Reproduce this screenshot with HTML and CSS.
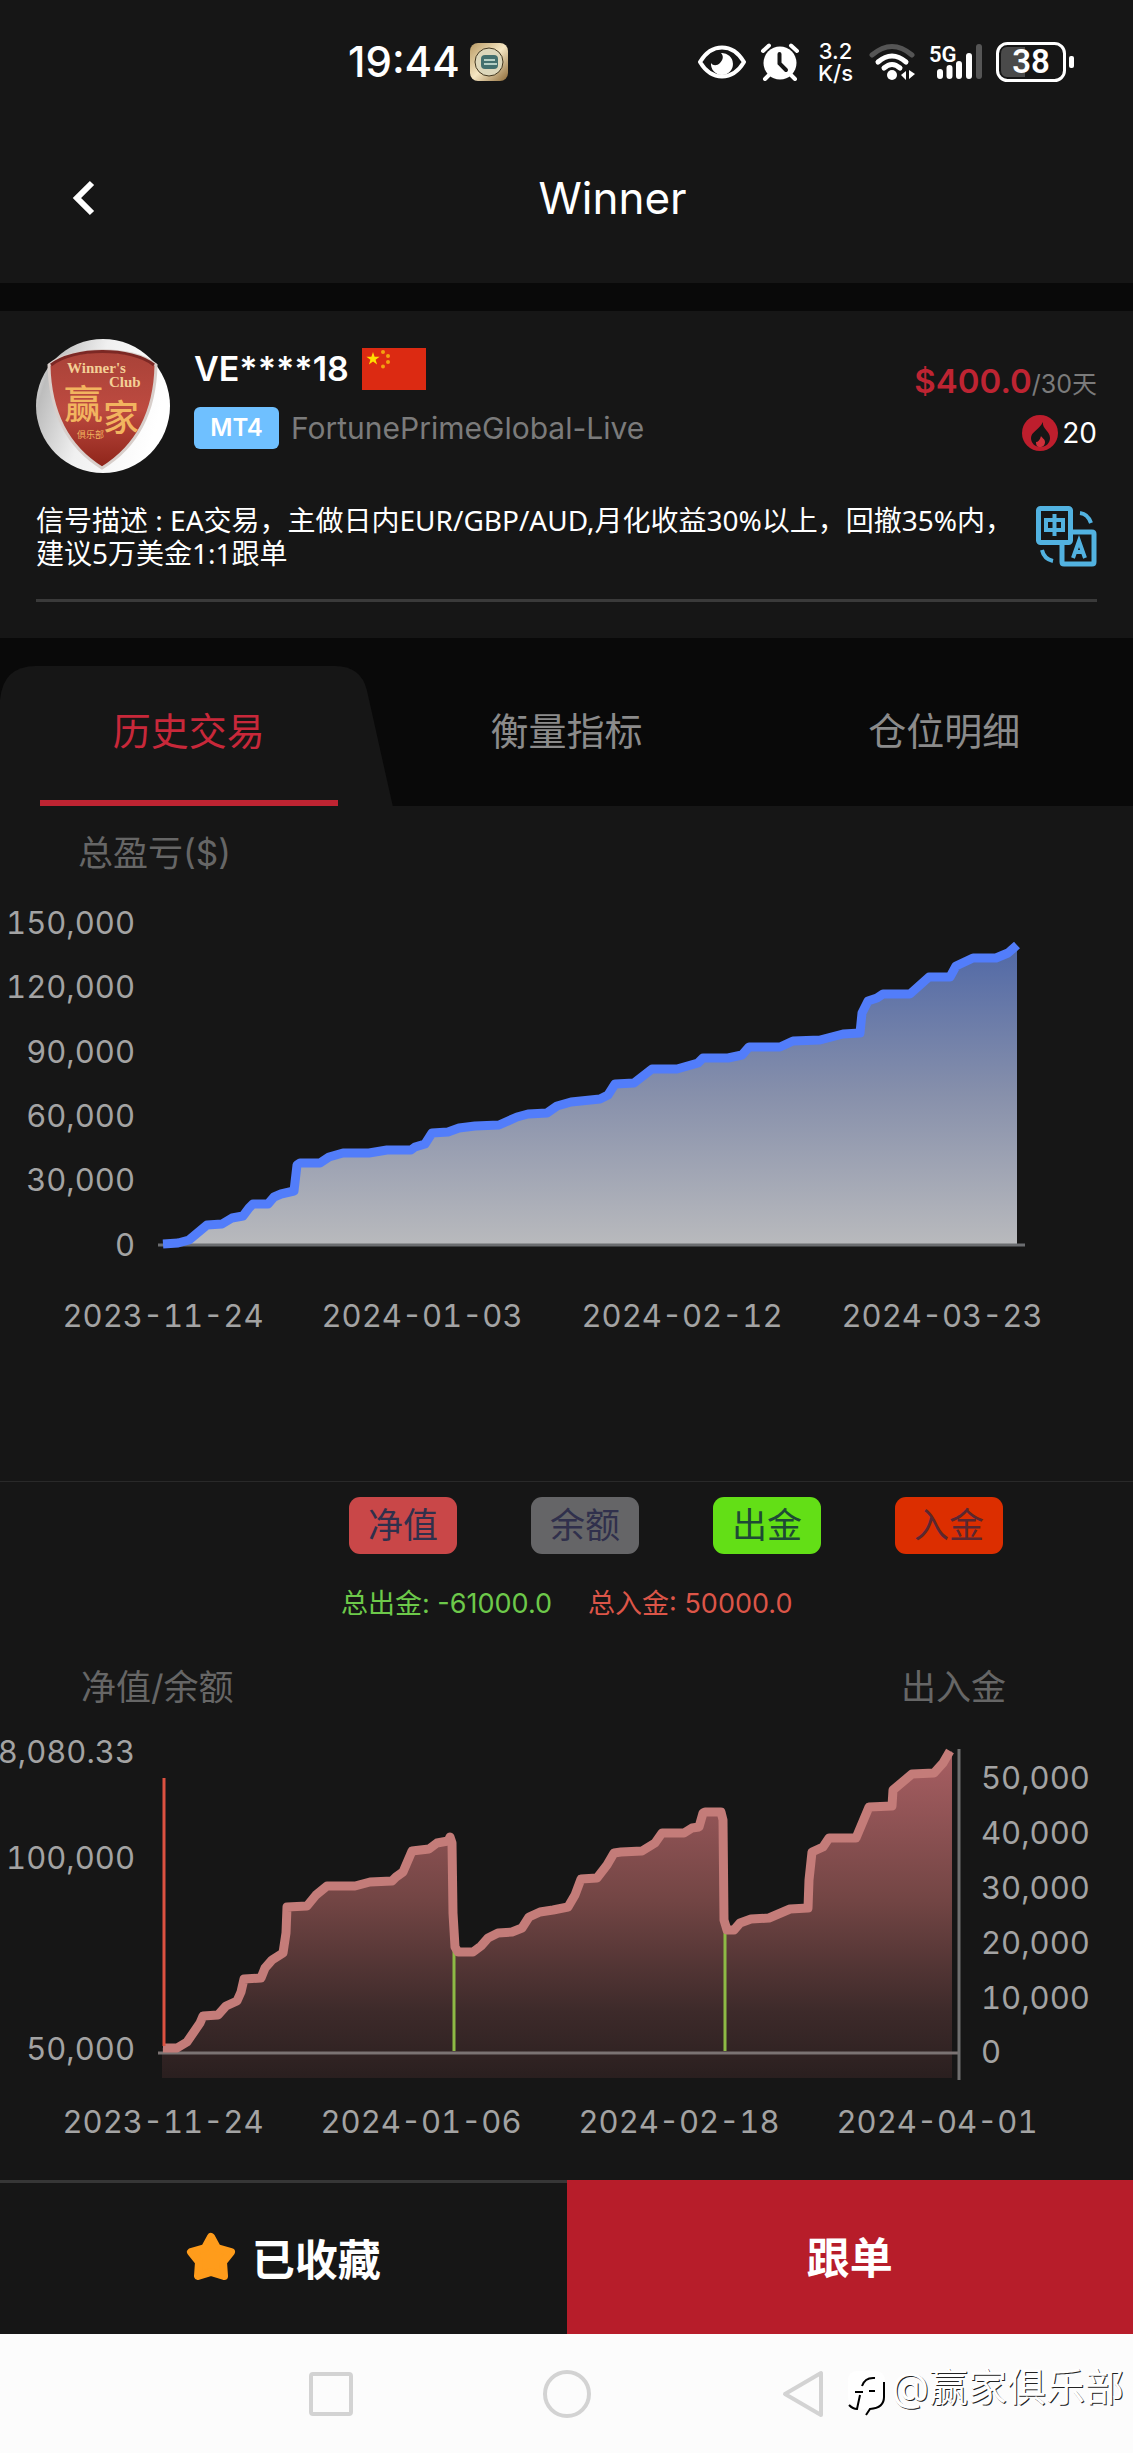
FILE: index.html
```html
<!DOCTYPE html>
<html lang="zh-CN">
<head>
<meta charset="utf-8">
<meta name="viewport" content="width=device-width, initial-scale=1">
<title>Winner</title>
<link rel="stylesheet" href="styles.css">
</head>
<body>
<header class="top">
  <div class="status">
    <div class="status-left">
      <span class="clock">19:44</span>
      <svg class="app-icon" width="38" height="38" viewBox="0 0 38 38" aria-hidden="true">
        <defs><linearGradient id="gold" x1="0" y1="0" x2="1" y2="1"><stop offset="0" stop-color="#b99a64"/><stop offset=".5" stop-color="#f5e6c2"/><stop offset="1" stop-color="#8d6a38"/></linearGradient></defs>
        <rect width="38" height="38" rx="8" fill="url(#gold)"/>
        <circle cx="19" cy="19" r="14" fill="#ddd7bb" stroke="#443820" stroke-width="1"/>
        <rect x="11" y="12" width="17" height="14" rx="4" fill="#44706e"/>
        <path d="M14 17h11M14 21h13" stroke="#b5cfc4" stroke-width="2"/>
      </svg>
    </div>
    <div class="status-right">
      <svg width="48" height="34" viewBox="0 0 48 34" aria-hidden="true">
        <path d="M2 17C8 7 16 2.500 24 2.500S40 7 46 17C40 27 32 31.500 24 31.500S8 27 2 17Z" fill="none" stroke="#fff" stroke-width="4" stroke-linejoin="round"/>
        <path d="M23 8a11 11 0 1 1-10 10c2 3 6 3 9 0s4-7 1-10Z" fill="#fff"/>
      </svg>
      <svg class="alarm" width="40" height="38" viewBox="0 0 40 38" aria-hidden="true">
        <circle cx="20" cy="20" r="16.500" fill="#fff"/>
        <path d="M3 8l6-5.500M37 8l-6-5.500M9 32l-4 4M31 32l4 4" stroke="#fff" stroke-width="4" stroke-linecap="round"/>
        <path d="M19.500 11v9.500l6.500 6.500" fill="none" stroke="#161616" stroke-width="4" stroke-linecap="round"/>
      </svg>
      <span class="speed">3.2<br>K/s</span>
      <svg class="wifi" width="47" height="38" viewBox="0 0 47 38" aria-hidden="true">
        <g fill="none" stroke="#fff" stroke-width="5" stroke-linecap="round">
          <path d="M3 12q20-17 40 0" stroke="#555"/>
          <path d="M9 19q14-12 28 0"/><path d="M15 25q8-7 16 0"/>
        </g>
        <circle cx="23" cy="32" r="5" fill="#fff"/>
        <path d="M32 32l5-4v9zM46 31l-6-4v9z" fill="#fff"/>
      </svg>
      <svg class="signal" width="54" height="38" viewBox="0 0 54 38" aria-hidden="true">
        <text x="0" y="19" class="signal-label">5G</text>
        <g stroke="#fff" stroke-width="6" stroke-linecap="round">
          <path d="M11 29v4M20.500 25v8M30 21v12M40 13v20"/><path d="M50 4v29" stroke="#555"/>
        </g>
      </svg>
      <svg width="79" height="40" viewBox="0 0 79 40" aria-hidden="true">
        <rect x="1.500" y="1.500" width="67" height="37" rx="10" fill="none" stroke="#fff" stroke-width="3"/>
        <path d="M11 5h18v30H11q-6 0-6-7V12q0-7 6-7Z" fill="#4a4a4a"/>
        <rect x="73" y="14" width="5" height="12" rx="2" fill="#fff"/>
        <text x="35" y="31" text-anchor="middle" class="battery-label">38</text>
      </svg>
    </div>
  </div>
  <nav class="nav">
    <button class="back" type="button" aria-label="返回">
      <svg width="24" height="36" viewBox="0 0 24 36" aria-hidden="true"><path d="M20 3L5 18l15 15" fill="none" stroke="#fff" stroke-width="6"/></svg>
    </button>
    <h1>Winner</h1>
  </nav>
</header>

<section class="profile">
  <div class="profile-head">
    <svg class="avatar" width="134" height="134" viewBox="0 0 134 134" role="img" aria-label="赢家俱乐部">
      <defs>
        <linearGradient id="silver" x1="0" y1="0" x2="1" y2=".3"><stop offset="0" stop-color="#fff"/><stop offset=".15" stop-color="#bdbdbd"/><stop offset=".5" stop-color="#f0f0f0"/><stop offset="1" stop-color="#fff"/></linearGradient>
        <linearGradient id="shield" x1="0" y1="0" x2="0" y2="1"><stop offset="0" stop-color="#a84238"/><stop offset=".5" stop-color="#bd4a40"/><stop offset="1" stop-color="#8e2419"/></linearGradient>
      </defs>
      <circle cx="67" cy="67" r="67" fill="url(#silver)"/>
      <path d="M13 26C35 7 98 7 120 26C119 75 100 108 66 129C32 108 14 75 13 26Z" fill="url(#shield)" stroke="#d8cfcb" stroke-width="3"/>
      <path d="M15 26C37 8 96 8 118 26" fill="none" stroke="#7c2824" stroke-width="3"/>
      <g fill="#f3cf96">
        <text x="31" y="34" class="crest-latin">Winner's</text>
        <text x="73" y="48" class="crest-latin">Club</text>
      </g>
      <g fill="#f2b45f">
        <text x="28" y="79" class="crest-big">赢</text>
        <text x="67" y="92" class="crest-mid">家</text>
        <text x="41" y="99" class="crest-small">俱乐部</text>
      </g>
    </svg>
    <div class="info">
      <div class="name-row">
        <h2>VE****18</h2>
        <svg width="64" height="42" viewBox="0 0 64 42" role="img" aria-label="中国">
          <rect width="64" height="42" fill="#dc2a12"/>
          <path d="M11 4l1.600 4.700h5l-4 3 1.500 4.800-4.100-2.900-4.100 2.900 1.500-4.800-4-3h5Z" fill="#ffde00"/>
          <g fill="#f4a010"><circle cx="21" cy="4" r="2"/><circle cx="26" cy="8" r="2"/><circle cx="26" cy="14" r="2"/><circle cx="21" cy="18.500" r="2"/></g>
        </svg>
      </div>
      <div class="server-row"><span class="badge">MT4</span><span class="server">FortunePrimeGlobal-Live</span></div>
    </div>
    <div class="offer">
      <div class="price"><strong>$400.0</strong><span>/30天</span></div>
      <div class="heat">
        <svg width="36" height="36" viewBox="0 0 36 36" aria-hidden="true">
          <circle cx="18" cy="18" r="18" fill="#be1e2d"/>
          <path d="M21 7c-1 7 7 9 7 16 0 5-4 9-9.500 9S9 28 9 23c0-6 8-8 12-16Z" fill="#161616"/>
          <path d="M19 21c1 2 4 3 4 6s-2 5-5 5-4-2-4-5c2 0 4-2 5-6Z" fill="#d0303a"/>
        </svg>
        <span>20</span>
      </div>
    </div>
  </div>
  <div class="description">
    <p>信号描述 : EA交易，主做日内EUR/GBP/AUD,月化收益30%以上，回撤35%内，<br>建议5万美金1:1跟单</p>
    <button class="translate" type="button" aria-label="翻译">
      <svg width="61" height="61" viewBox="0 0 61 61" aria-hidden="true">
        <g fill="none" stroke="#52b2e0" stroke-width="5">
          <rect x="2.500" y="2.500" width="32" height="34" rx="2"/>
          <path d="M36 26h20q2 0 2 2v28q0 2-2 2H28q-2 0-2-2V38"/>
          <path d="M44 7q8 1 11 10M6 44q2 9 11 11M10 14h17v10H10zM18.500 8v22M37 52l6-17 6 17M39 46h8" stroke-width="4"/>
        </g>
      </svg>
    </button>
  </div>
  <hr>
</section>

<div class="tabs" role="tablist">
  <button class="tab tab-active" type="button" role="tab" aria-selected="true">
    <svg class="tab-shape" viewBox="0 0 394 140" preserveAspectRatio="none" aria-hidden="true"><path d="M0 34Q3 0 36 0H336Q362 0 368 24L394 140H0Z" fill="#161616"/></svg>
    <span>历史交易</span>
  </button>
  <button class="tab" type="button" role="tab" aria-selected="false"><span>衡量指标</span></button>
  <button class="tab" type="button" role="tab" aria-selected="false"><span>仓位明细</span></button>
</div>

<main>
  <section class="profit">
    <h3>总盈亏($)</h3>
    <svg class="chart" viewBox="0 873 1133 608" role="img" aria-label="总盈亏">
      <defs><linearGradient id="blue" gradientUnits="userSpaceOnUse" x1="0" y1="945" x2="0" y2="1245"><stop offset="0" stop-color="#5068a6"/><stop offset=".5" stop-color="#8790ab"/><stop offset="1" stop-color="#b9babd"/></linearGradient></defs>
      <path fill="url(#blue)" d="M163 1244L178 1243 189 1240 207 1225 222 1224 232 1218 243 1216 249 1208 253 1204 268 1204 274 1197 281 1194 294 1191 297 1165 300 1163 320 1163 329 1157 343 1153 369 1153 387 1150 411 1150 415 1147 425 1144 432 1133 448 1132 459 1128 475 1126 499 1125 517 1117 528 1114 547 1113 557 1106 571 1102 600 1099 608 1095 615 1084 634 1083 652 1069 677 1069 698 1063 703 1058 728 1058 742 1055 749 1047 780 1047 793 1041 820 1040 843 1034 860 1033 862 1013 868 1001 877 998 883 994 910 994 929 977 950 977 956 966 973 958 996 958 1008 953 1017 945V1245H163Z"/>
      <path d="M158 1245H1025" stroke="#6b6d70" stroke-width="3"/>
      <path class="line line-blue" d="M163 1244L178 1243 189 1240 207 1225 222 1224 232 1218 243 1216 249 1208 253 1204 268 1204 274 1197 281 1194 294 1191 297 1165 300 1163 320 1163 329 1157 343 1153 369 1153 387 1150 411 1150 415 1147 425 1144 432 1133 448 1132 459 1128 475 1126 499 1125 517 1117 528 1114 547 1113 557 1106 571 1102 600 1099 608 1095 615 1084 634 1083 652 1069 677 1069 698 1063 703 1058 728 1058 742 1055 749 1047 780 1047 793 1041 820 1040 843 1034 860 1033 862 1013 868 1001 877 998 883 994 910 994 929 977 950 977 956 966 973 958 996 958 1008 953 1017 945"/>
      <g class="label" text-anchor="end">
        <text x="135" y="934">150,000</text><text x="135" y="998">120,000</text><text x="135" y="1063">90,000</text><text x="135" y="1127">60,000</text><text x="135" y="1191">30,000</text><text x="135" y="1256">0</text>
      </g>
      <g class="label" text-anchor="middle">
        <text x="163" y="1327">2023-11-24</text><text x="422" y="1327">2024-01-03</text><text x="682" y="1327">2024-02-12</text><text x="942" y="1327">2024-03-23</text>
      </g>
    </svg>
  </section>

  <section class="equity">
    <div class="legend">
      <button class="pill pill-equity" type="button">净值</button>
      <button class="pill pill-balance" type="button">余额</button>
      <button class="pill pill-out" type="button">出金</button>
      <button class="pill pill-in" type="button">入金</button>
    </div>
    <div class="totals"><span class="total-out">总出金: -61000.0</span><span class="total-in">总入金: 50000.0</span></div>
    <div class="axis-names"><h3>净值/余额</h3><h3>出入金</h3></div>
    <svg class="chart" viewBox="0 1707 1133 473" role="img" aria-label="净值/余额与出入金">
      <defs><linearGradient id="rose" gradientUnits="userSpaceOnUse" x1="0" y1="1748" x2="0" y2="2078"><stop offset="0" stop-color="#a95f63"/><stop offset=".45" stop-color="#744645"/><stop offset=".8" stop-color="#3d2a2a"/><stop offset="1" stop-color="#2a1f1f"/></linearGradient></defs>
      <path fill="url(#rose)" d="M163 2048L177 2048 187 2042 200 2023 203 2016 218 2015 226 2006 237 2001 241 1992 244 1979 261 1978 265 1968 272 1960 283 1953 286 1933 287 1907 307 1906 316 1895 327 1886 355 1886 370 1882 392 1881 396 1877 403 1872 412 1851 429 1849 437 1843 448 1841 450 1837 452 1843 453 1913 455 1947 458 1952 473 1952 481 1946 488 1938 498 1933 512 1932 522 1928 529 1917 540 1912 553 1910 568 1907 575 1895 581 1879 597 1878 607 1865 614 1853 621 1852 642 1851 655 1843 662 1833 684 1833 692 1828 699 1827 703 1813 705 1812 721 1812 723 1820 724 1920 727 1930 734 1930 740 1923 751 1919 769 1918 790 1909 808 1908 809 1880 812 1852 823 1847 829 1838 856 1838 869 1807 892 1806 893 1790 912 1774 934 1773 943 1763 952 1751V2078H162V2048Z"/>
      <path d="M158 2053H959" stroke="#7b7373" stroke-width="3"/>
      <path d="M959 1749V2080" stroke="#6f6f6f" stroke-width="3"/>
      <path d="M454 1950V2051M725 1930V2051" stroke="#8dba45" stroke-width="3"/>
      <path class="line line-rose" d="M163 2048L177 2048 187 2042 200 2023 203 2016 218 2015 226 2006 237 2001 241 1992 244 1979 261 1978 265 1968 272 1960 283 1953 286 1933 287 1907 307 1906 316 1895 327 1886 355 1886 370 1882 392 1881 396 1877 403 1872 412 1851 429 1849 437 1843 448 1841 450 1837 452 1843 453 1913 455 1947 458 1952 473 1952 481 1946 488 1938 498 1933 512 1932 522 1928 529 1917 540 1912 553 1910 568 1907 575 1895 581 1879 597 1878 607 1865 614 1853 621 1852 642 1851 655 1843 662 1833 684 1833 692 1828 699 1827 703 1813 705 1812 721 1812 723 1820 724 1920 727 1930 734 1930 740 1923 751 1919 769 1918 790 1909 808 1908 809 1880 812 1852 823 1847 829 1838 856 1838 869 1807 892 1806 893 1790 912 1774 934 1773 943 1763 950 1751"/>
      <path d="M164 1778V2046" stroke="#dc5140" stroke-width="3"/>
      <g class="label" text-anchor="end">
        <text x="135" y="1763">8,080.33</text><text x="135" y="1869">100,000</text><text x="135" y="2060">50,000</text>
      </g>
      <g class="label">
        <text x="981" y="1789">50,000</text><text x="981" y="1844">40,000</text><text x="981" y="1899">30,000</text><text x="981" y="1954">20,000</text><text x="981" y="2009">10,000</text><text x="981" y="2063">0</text>
      </g>
      <g class="label" text-anchor="middle">
        <text x="163" y="2133">2023-11-24</text><text x="421" y="2133">2024-01-06</text><text x="679" y="2133">2024-02-18</text><text x="937" y="2133">2024-04-01</text>
      </g>
    </svg>
  </section>
</main>

<div class="actions">
  <button class="action action-saved" type="button">
    <svg width="50" height="50" viewBox="0 0 50 50" aria-hidden="true"><path d="M25 5l6 11 14 4-8 10 1 14-13-4-13 4 1-14-8-10 14-4Z" fill="#ff9c1b" stroke="#ff9c1b" stroke-width="8" stroke-linejoin="round"/></svg>
    <span>已收藏</span>
  </button>
  <button class="action action-follow" type="button">跟单</button>
</div>

<footer class="system">
  <svg class="sys-square" width="44" height="44" viewBox="0 0 44 44" aria-hidden="true"><rect x="2" y="2" width="40" height="40" rx="2" fill="none" stroke="#d3d3d3" stroke-width="4"/></svg>
  <svg class="sys-circle" width="50" height="50" viewBox="0 0 50 50" aria-hidden="true"><circle cx="25" cy="25" r="22" fill="none" stroke="#d3d3d3" stroke-width="4"/></svg>
  <svg class="sys-back" width="42" height="50" viewBox="0 0 42 50" aria-hidden="true"><path d="M39 4v42L3 25Z" fill="none" stroke="#d3d3d3" stroke-width="4" stroke-linejoin="round"/></svg>
  <div class="watermark">
    <svg width="40" height="48" viewBox="0 0 40 48" aria-hidden="true">
      <path d="M10 1h18q10 0 10 10v16q0 12-14 12l-4 6v-6q-10 0-12-3Q1 34 1 26V11Q1 1 10 1Z" fill="#fff"/>
      <path d="M37 12v15q0 11-14 12l-4 6M2 35q4 4 8 4l3-14M28 8q-10-1-13 8M8 22h8M22 21h6" fill="none" stroke="#000" stroke-width="2"/>
    </svg>
    <span>@赢家俱乐部</span>
  </div>
</footer>
</body>
</html>
```
FILE: styles.css
```css
* { box-sizing: border-box; }

body {
  margin: 0;
  background: #161616;
  color: #fff;
  font-family: Inter, "Noto Sans CJK SC", sans-serif;
}

h1, h2, h3, p { margin: 0; font-weight: 400; }

button {
  padding: 0;
  border: 0;
  background: none;
  color: inherit;
  font: inherit;
}

svg { display: block; flex: none; }

/* Status bar and title */
.top { border-bottom: 28px solid #090909; }

.status {
  display: flex;
  justify-content: space-between;
  padding: 42px 58px 42px 348px;
}

.status-left, .status-right {
  display: flex;
  align-items: center;
  height: 40px;
}

.status-left { gap: 10px; }
.clock { font-size: 42px; font-weight: 500; line-height: 44px; }
.alarm { margin-left: 14px; }

.speed {
  margin-left: 18px;
  font-size: 22px;
  font-weight: 500;
  line-height: 22px;
  text-align: center;
}

.wifi { margin-left: 16px; }
.signal { margin: 0 13px; }
.signal-label { fill: #fff; font: 600 22px Roboto, sans-serif; }
.battery-label { fill: #fff; font: 600 33px Roboto, sans-serif; }

.nav {
  display: grid;
  grid-template-columns: 1fr auto 1fr;
  align-items: center;
  padding: 43px 72px 54px;
}

.back { justify-self: start; }
.nav h1 { padding-left: 92px; font-size: 44px; line-height: 62px; }

/* Signal profile */
.profile { padding: 28px 36px 36px; }
.profile-head { display: flex; }
.crest-latin { font: 700 15px "Liberation Serif", serif; }
.crest-big { font-size: 39px; font-weight: 500; }
.crest-mid { font-size: 36px; font-weight: 500; }
.crest-small { font-size: 9px; }

.info {
  display: flex;
  flex-direction: column;
  gap: 17px;
  flex: 1;
  padding: 9px 0 0 24px;
}

.name-row, .server-row { display: flex; align-items: center; height: 42px; }
.name-row { gap: 13px; }
.name-row h2 { font-size: 34px; font-weight: 600; line-height: 42px; }
.server-row { gap: 12px; }

.badge {
  width: 85px;
  border-radius: 6px;
  background: #6fc0ff;
  font-size: 24px;
  font-weight: 600;
  line-height: 42px;
  text-align: center;
}

.server { color: #7b7b7b; font-size: 30px; line-height: 44px; }

.offer {
  display: flex;
  flex-direction: column;
  align-items: flex-end;
  gap: 8px;
  padding-top: 22px;
}

.price { line-height: 40px; }
.price strong { color: #be2432; font-size: 33px; font-weight: 600; }
.price span { color: #7b7b7b; font-size: 25px; }
.heat { display: flex; align-items: center; gap: 4px; font-size: 28px; line-height: 36px; }

.description { display: flex; justify-content: space-between; margin-top: 31px; }

.description p {
  font-family: "Noto Sans", "Noto Sans CJK SC", sans-serif;
  font-size: 28px;
  line-height: 33px;
  white-space: nowrap;
}

.translate { margin-top: 2px; height: 61px; }
.profile hr { height: 3px; margin: 29px 0 0; border: 0; background: #3a3a3a; }

/* Tabs */
.tabs {
  display: grid;
  grid-template-columns: repeat(3, 1fr);
  padding-top: 28px;
  background: #090909;
}

.tab {
  position: relative;
  color: #8b8b8b;
  font-size: 38px;
  line-height: 130px;
  padding-bottom: 10px;
}

.tab span { position: relative; }
.tab-active { color: #c8283a; }

.tab-shape {
  position: absolute;
  top: 0;
  left: 0;
  width: 104%;
  height: 100%;
}

.tab-active::after {
  content: "";
  position: absolute;
  right: 40px;
  bottom: 0;
  left: 40px;
  height: 6px;
  background: #be2432;
}

/* Charts */
h3 { color: #666; font-size: 35px; line-height: 40px; }
.profit h3 { padding: 27px 0 0 78px; box-sizing: content-box; }
.chart { width: 100%; height: auto; }
.label { fill: #a3a3a3; font-size: 31px; font-variant-numeric: tabular-nums; }
.line { fill: none; stroke-width: 9; stroke-linejoin: round; }
.line-blue { stroke: #527dfa; }
.line-rose { stroke: #c47c79; }

.equity { border-top: 1px solid #292929; }
.legend { display: flex; gap: 74px; padding: 15px 0 0 349px; }

.pill {
  width: 108px;
  border-radius: 11px;
  color: #30304c;
  font-size: 35px;
  line-height: 57px;
}

.pill-equity { background: #c94748; }
.pill-balance { background: #656567; }
.pill-out { background: #63df16; color: #1e4a35; }
.pill-in { background: #dc2e00; color: #5a2730; }

.totals {
  display: flex;
  gap: 36px;
  padding: 33px 0 0 341px;
  font-size: 27px;
  line-height: 34px;
}

.total-out { color: #6dc94a; }
.total-in { color: #dc5548; }
.axis-names { display: flex; justify-content: space-between; padding: 46px 127px 0 81px; }

/* Bottom actions */
.actions { display: grid; grid-template-columns: 1fr 1fr; }

.action {
  display: flex;
  align-items: center;
  justify-content: center;
  gap: 16px;
  height: 154px;
  padding-bottom: 4px;
  font-size: 43px;
  font-weight: 700;
}

.action-saved { border-top: 3px solid #363636; }
.action-follow { background: #b71d2a; }

.system {
  display: grid;
  grid-template-columns: 1fr auto 1fr;
  grid-template-rows: 119px;
  align-items: center;
  position: relative;
  background: #fcfcfc;
}

.sys-square { justify-self: end; margin-right: 189px; }
.sys-back { margin-left: 190px; }

/* Account mark over the system bar */
.watermark {
  position: absolute;
  top: 19px;
  right: 9px;
  display: flex;
  gap: 4px;
  color: #fff;
  font-size: 39px;
  line-height: 68px;
  text-shadow: 1px 1px 0 #222;
}

.watermark svg { margin-top: 17px; }
```
